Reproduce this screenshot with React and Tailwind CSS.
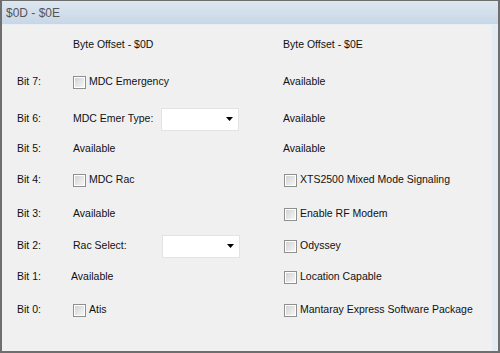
import React from "react";

const Check = () => (
  <span className="inline-block w-[13px] h-[13px] border border-[#8e8f8f] bg-white p-[1px] shrink-0">
    <span className="block w-full h-full bg-gradient-to-br from-[#d2d3d4] to-[#f6f6f6]" />
  </span>
);

const CheckItem = ({ label }) => (
  <div className="flex items-center">
    <Check />
    <span className="ml-[3px]">{label}</span>
  </div>
);

const Combo = () => (
  <div className="w-[78px] h-[23px] bg-white border border-[#e3e3e3] flex items-center justify-end pr-[5px]">
    <svg width="7" height="4" viewBox="0 0 7 4">
      <polygon points="0,0 7,0 3.5,4" fill="#000" />
    </svg>
  </div>
);

const Row = ({ h, bit, mid, right, midClass = "pl-[15px]" }) => (
  <div className={`flex items-center ${h}`}>
    <div className="w-[56px] pl-[15px]">{bit}</div>
    <div className={`w-[210px] ${midClass}`}>{mid}</div>
    <div className="flex-1">{right}</div>
  </div>
);

const R = ({ children }) => <span className="pl-[15px]">{children}</span>;
const RC = ({ label }) => (
  <div className="pl-[16px]">
    <CheckItem label={label} />
  </div>
);

export default function App() {
  return (
    <div
      className="w-[500px] h-[353px] bg-[#f0f0f0] border-t border-l-2 border-r-2 border-b-2 border-[#6e6e6e] text-[10.5px] text-[#111] flex flex-col overflow-hidden"
      style={{ fontFamily: '"Liberation Sans", Arial, sans-serif' }}
    >
      <div className="h-[24px] shrink-0 bg-gradient-to-b from-[#dde7f1] to-[#c7d7e6] border-b border-[#e8eef4] flex items-center pl-[4px] text-[12px] text-[#555]">
        $0D - $0E
      </div>
      <div className="flex-1 flex border-r-[6px] border-[#e4ebf2]">
        <div className="flex-1 flex flex-col">
          <Row h="h-[39px]" bit="" mid="Byte Offset - $0D" right={<R>Byte Offset - $0E</R>} />
          <Row h="h-[36px]" bit="Bit 7:" mid={<CheckItem label="MDC Emergency" />} right={<R>Available</R>} />
          <Row
            h="h-[38px]"
            bit="Bit 6:"
            mid={
              <div className="flex items-center">
                <span className="w-[88px]">MDC Emer Type:</span>
                <Combo />
              </div>
            }
            right={<R>Available</R>}
          />
          <Row h="h-[22px]" bit="Bit 5:" mid="Available" right={<R>Available</R>} />
          <Row h="h-[40px]" bit="Bit 4:" mid={<CheckItem label="MDC Rac" />} right={<RC label="XTS2500 Mixed Mode Signaling" />} />
          <Row h="h-[28px]" bit="Bit 3:" mid="Available" right={<RC label="Enable RF Modem" />} />
          <Row
            h="h-[36px]"
            bit="Bit 2:"
            mid={
              <div className="flex items-center">
                <span className="w-[89px]">Rac Select:</span>
                <Combo />
              </div>
            }
            right={<RC label="Odyssey" />}
          />
          <Row h="h-[26px]" bit="Bit 1:" mid="Available" midClass="pl-[13px]" right={<RC label="Location Capable" />} />
          <Row h="h-[40px]" bit="Bit 0:" mid={<CheckItem label="Atis" />} right={<RC label="Mantaray Express Software Package" />} />
        </div>
      </div>
    </div>
  );
}
